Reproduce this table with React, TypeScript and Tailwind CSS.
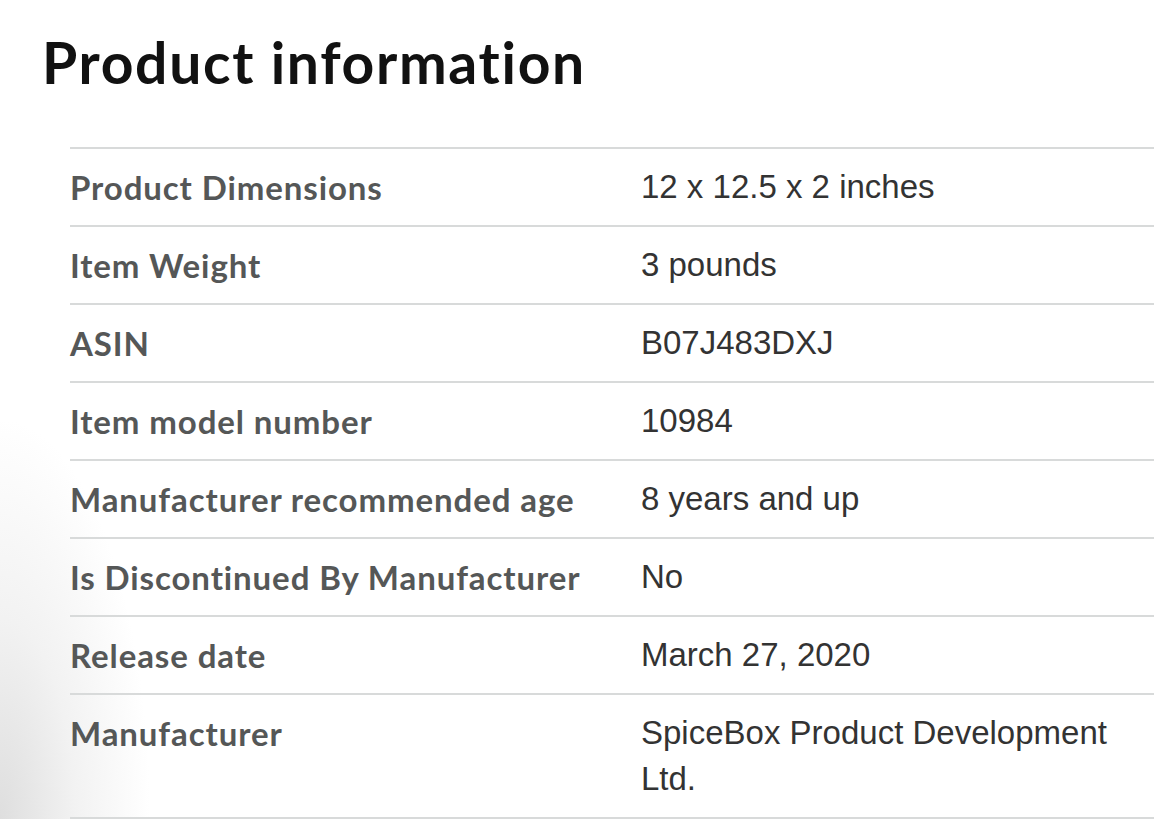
import React from "react";

const rows: { label: string; value: string }[] = [
  { label: "Product Dimensions", value: "12 x 12.5 x 2 inches" },
  { label: "Item Weight", value: "3 pounds" },
  { label: "ASIN", value: "B07J483DXJ" },
  { label: "Item model number", value: "10984" },
  { label: "Manufacturer recommended age", value: "8 years and up" },
  { label: "Is Discontinued By Manufacturer", value: "No" },
  { label: "Release date", value: "March 27, 2020" },
  { label: "Manufacturer", value: "SpiceBox Product Development Ltd." },
];

export default function App() {
  return (
    <div className="w-[1154px] h-[819px] overflow-hidden bg-[radial-gradient(ellipse_150px_400px_at_0%_100%,#dedede_0%,#f2f2f2_50%,#ffffff_100%)]">
      <h1 className="pl-[42px] pt-[27px] text-[57px] leading-[70px] font-bold tracking-[1.7px] [font-variant-ligatures:none] text-[#111111] font-['Lato',sans-serif]">
        Product information
      </h1>
      <div className="ml-[70px] mt-[50px]">
        {rows.map((r) => (
          <div key={r.label} className="flex border-t-2 border-[#d8dada] py-[15px]">
            <div className="w-[571px] shrink-0 text-[33px] leading-[46px] font-bold tracking-[0.9px] [font-variant-ligatures:none] text-[#555757] font-['Lato',sans-serif]">
              {r.label}
            </div>
            <div className="w-[470px] text-[33px] leading-[46px] text-[#333333] font-['Liberation_Sans',Arial,sans-serif]">
              {r.value}
            </div>
          </div>
        ))}
        <div className="border-t-2 border-[#d8dada]" />
      </div>
    </div>
  );
}
